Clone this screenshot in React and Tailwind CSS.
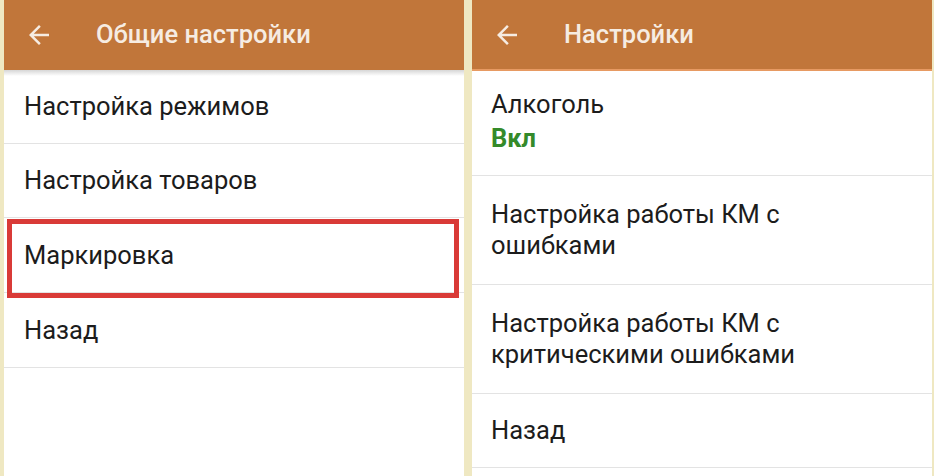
import React from "react";

function BackArrow() {
  return (
    <svg width="30" height="30" viewBox="0 0 24 24" className="shrink-0">
      <path fill="#F6ECE2" d="M20 11H7.83l5.59-5.59L12 4l-8 8 8 8 1.41-1.41L7.83 13H20v-2z" />
    </svg>
  );
}

function Header({ title, shadow }) {
  return (
    <div className="relative h-[70px] shrink-0 bg-[#C1763A] flex items-center">
      <div className="w-[92px] pl-[20px] flex items-center">
        <BackArrow />
      </div>
      <div className="text-[25.5px] font-medium text-[#F6ECE2] leading-none">{title}</div>
      {shadow ? (
        <div className="absolute left-0 right-0 top-[70px] h-[6px] bg-gradient-to-b from-[#d6d6d6] to-transparent z-10" />
      ) : (
        <div className="absolute left-0 right-0 bottom-[-1px] h-[2px] bg-[#E79A62]" />
      )}
    </div>
  );
}

export default function App() {
  return (
    <div
      className="w-[934px] h-[476px] bg-[#EFE8C2] flex pl-[4px] gap-[8px] overflow-hidden text-[#1c1c1c]"
      style={{ fontFamily: "Roboto, 'Liberation Sans', sans-serif" }}
    >
      {/* Left panel */}
      <div className="w-[460px] h-full bg-white flex flex-col">
        <Header title="Общие настройки" shadow />
        <div className="h-[74px] border-b border-[#E3E3E3] flex items-center pl-[20px] text-[25.5px]">
          Настройка режимов
        </div>
        <div className="h-[74px] border-b border-[#E3E3E3] flex items-center pl-[20px] text-[25.5px]">
          Настройка товаров
        </div>
        <div className="relative h-[75px] border-b border-[#E3E3E3] flex items-center pl-[20px] text-[25.5px]">
          Маркировка
          <div className="absolute left-[3px] right-[5px] top-[1px] bottom-[-6px] border-[5px] border-[#D93A37]" />
        </div>
        <div className="h-[75px] border-b border-[#E3E3E3] flex items-center pl-[20px] text-[25.5px]">
          Назад
        </div>
      </div>

      {/* Right panel */}
      <div className="w-[460px] h-full bg-white flex flex-col">
        <Header title="Настройки" />
        <div className="h-[106px] border-b border-[#E3E3E3] flex flex-col justify-center pl-[19px] text-[25.5px]">
          <div className="leading-[30px] mt-[-4px]">Алкоголь</div>
          <div className="leading-[30px] mt-[4px] font-bold text-[#348A2A]">Вкл</div>
        </div>
        <div className="h-[109px] border-b border-[#E3E3E3] flex flex-col justify-center pl-[19px] text-[25.5px]">
          <div className="leading-[31px]">Настройка работы КМ с</div>
          <div className="leading-[31px]">ошибками</div>
        </div>
        <div className="h-[109px] border-b border-[#E3E3E3] flex flex-col justify-center pl-[19px] text-[25.5px]">
          <div className="leading-[31px]">Настройка работы КМ с</div>
          <div className="leading-[31px]">критическими ошибками</div>
        </div>
        <div className="h-[74px] border-b border-[#E3E3E3] flex items-center pl-[19px] text-[25.5px]">
          Назад
        </div>
      </div>
    </div>
  );
}
